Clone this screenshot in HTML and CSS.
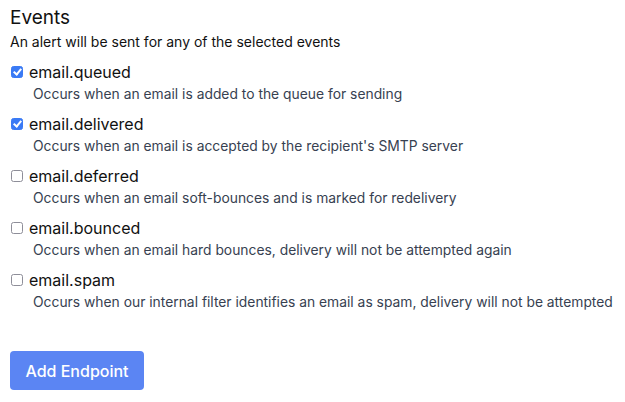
FILE: index.html
```html
<!DOCTYPE html>
<html>
<head>
<meta charset="utf-8">
<link rel="stylesheet" href="styles.css">
</head>
<body>
<div class="page">
  <h2 class="title">Events</h2>
  <p class="subtitle">An alert will be sent for any of the selected events</p>
  <ul class="events">
    <li class="event">
      <label class="event-label"><input class="check" type="checkbox" checked> email.queued</label>
      <p class="event-desc">Occurs when an email is added to the queue for sending</p>
    </li>
    <li class="event">
      <label class="event-label"><input class="check" type="checkbox" checked> email.delivered</label>
      <p class="event-desc">Occurs when an email is accepted by the recipient's SMTP server</p>
    </li>
    <li class="event">
      <label class="event-label"><input class="check" type="checkbox"> email.deferred</label>
      <p class="event-desc">Occurs when an email soft-bounces and is marked for redelivery</p>
    </li>
    <li class="event">
      <label class="event-label"><input class="check" type="checkbox"> email.bounced</label>
      <p class="event-desc">Occurs when an email hard bounces, delivery will not be attempted again</p>
    </li>
    <li class="event">
      <label class="event-label"><input class="check" type="checkbox"> email.spam</label>
      <p class="event-desc">Occurs when our internal filter identifies an email as spam, delivery will not be attempted</p>
    </li>
  </ul>
  <button class="btn">Add Endpoint</button>
</div>
</body>
</html>
```
FILE: styles.css
```css
html, body { margin: 0; padding: 0; background: #fff; }
body { font-family: Inter, "Liberation Sans", sans-serif; color: #111; }
.page { padding: 6px 10px; }
.title { margin: 0; font-size: 19px; font-weight: 400; line-height: 24px; color: #111; }
.subtitle { margin: 2px 0 8px; font-size: 14px; line-height: 20px; color: #111; }
.events { list-style: none; margin: 0; padding: 0; }
.event { height: 52px; }
.event-label { display: flex; align-items: center; gap: 6px; font-size: 16px; line-height: 24px; color: #111; }
.check {
  appearance: none; -webkit-appearance: none;
  position: relative;
  box-sizing: border-box;
  width: 12px; height: 12px; margin: 0 0 0 1px;
  border: 1.5px solid #8e8e99; border-radius: 2.5px; background: #fff;
}
.check:checked { background: #3a7af5; border-color: #3a7af5; }
.check:checked::after {
  content: ""; position: absolute;
  left: 3px; top: 0px; width: 3px; height: 6px;
  border: solid #fff; border-width: 0 2px 2px 0;
  transform: rotate(40deg);
}
.event-desc { margin: 0; padding-left: 23px; font-size: 13.85px; line-height: 20px; color: #374151; white-space: nowrap; }
.btn { margin-top: 31px; width: 134px; height: 39px; border: 0; border-radius: 4px; background: #5b85f3; color: #fff; font-family: Inter, "Liberation Sans", sans-serif; font-size: 16px; font-weight: 500; }
```
